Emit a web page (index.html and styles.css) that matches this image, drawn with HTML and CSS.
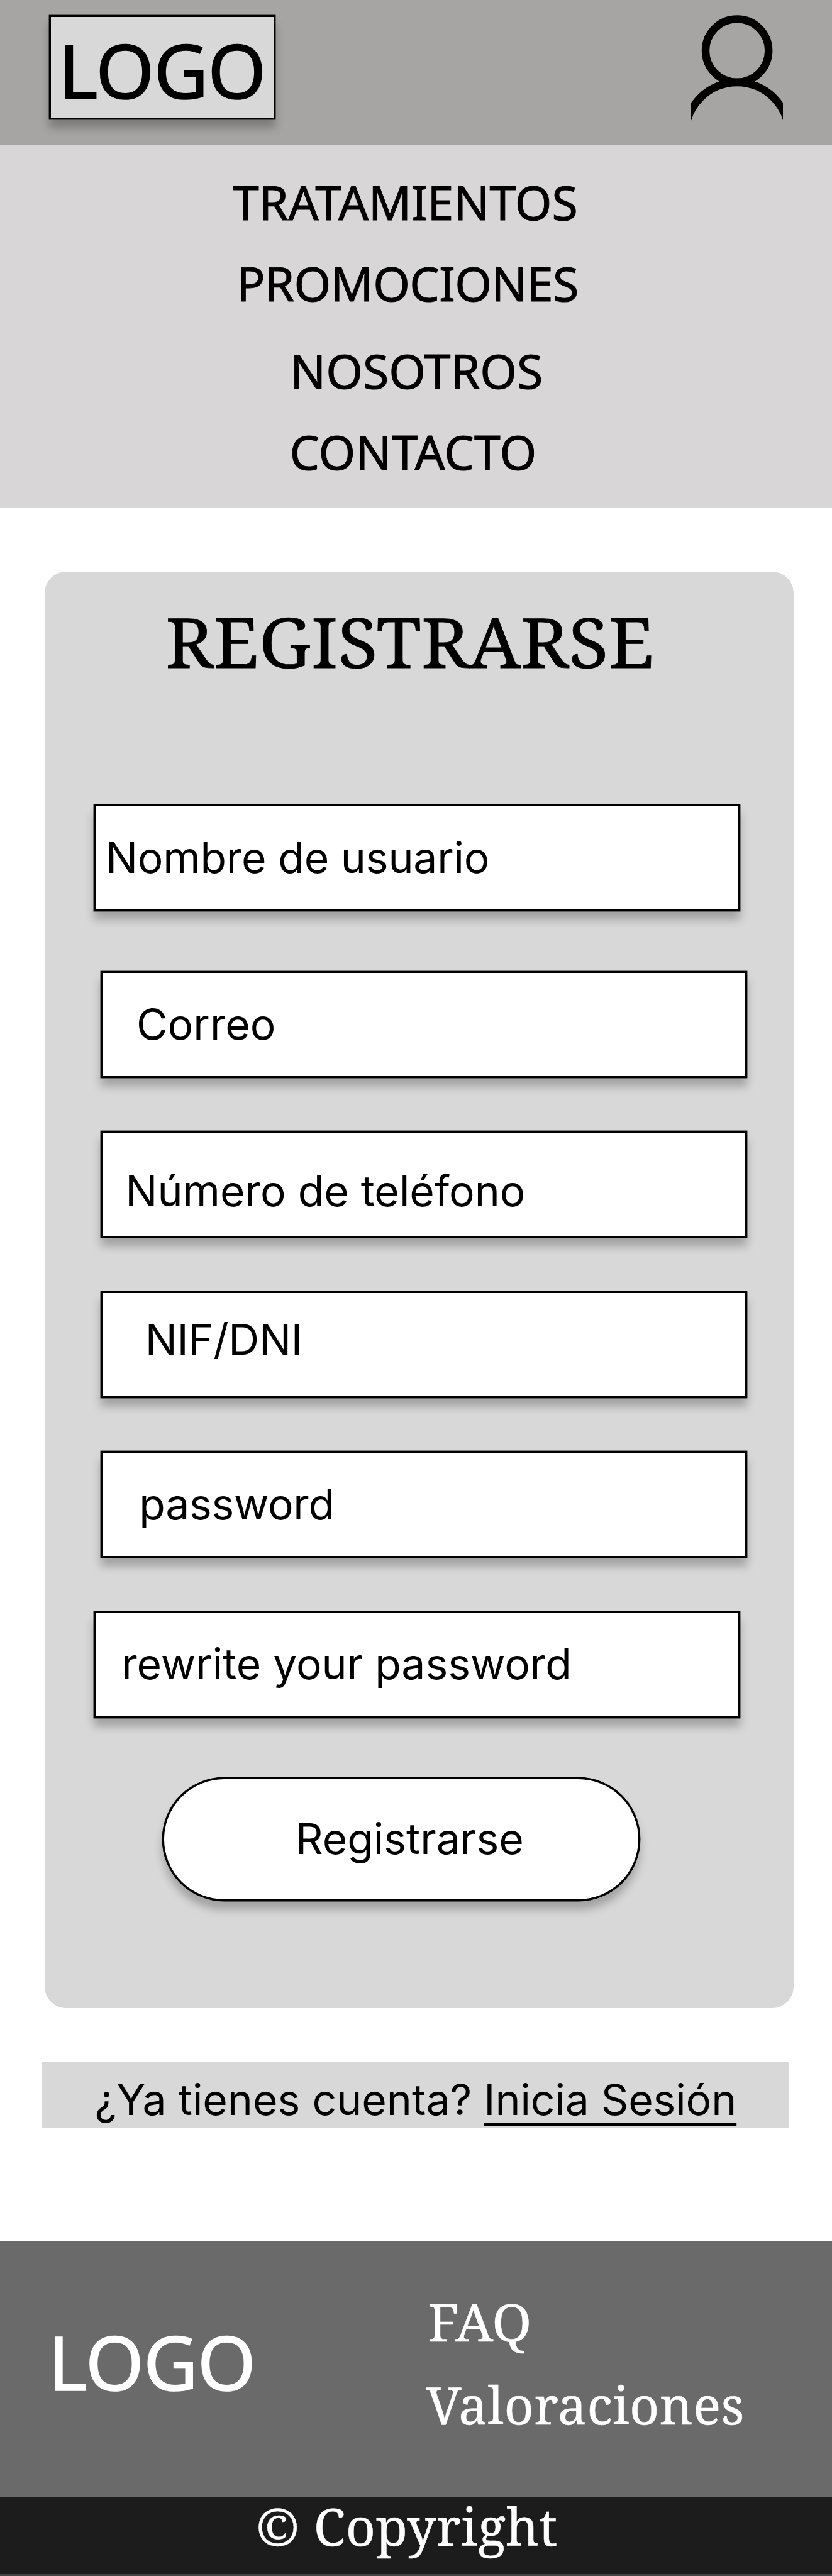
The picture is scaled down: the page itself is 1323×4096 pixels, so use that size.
FILE: index.html
```html
<!DOCTYPE html>
<html lang="es">
<head>
<meta charset="utf-8">
<title>Registrarse</title>
<link rel="stylesheet" href="styles.css">
</head>
<body>
<header class="header">
  <a class="logo">LOGO</a>
  <svg class="user-icon" viewBox="0 0 179 208" fill="none" stroke="#000" stroke-width="15.2">
    <circle cx="89.8" cy="69.5" r="61.6"/>
    <circle cx="89.8" cy="232.3" r="100.9"/>
  </svg>
</header>
<nav class="menu">
  <a class="menu-item treatments">TRATAMIENTOS</a>
  <a class="menu-item promotions">PROMOCIONES</a>
  <a class="menu-item about">NOSOTROS</a>
  <a class="menu-item contact">CONTACTO</a>
</nav>
<main>
  <form class="card">
    <h1 class="title">REGISTRARSE</h1>
    <div class="field field-user">Nombre de usuario</div>
    <div class="field field-mail">Correo</div>
    <div class="field field-phone">Número de teléfono</div>
    <div class="field field-id">NIF/DNI</div>
    <div class="field field-password">password</div>
    <div class="field field-repeat">rewrite your password</div>
    <div class="submit">Registrarse</div>
  </form>
  <p class="login">¿Ya tienes cuenta? <a class="login-link">Inicia Sesión</a></p>
</main>
<footer>
  <div class="footer-main">
    <div class="footer-logo">LOGO</div>
    <div class="footer-links">
      <a class="faq">FAQ</a>
      <a class="reviews">Valoraciones</a>
    </div>
  </div>
  <div class="copyright">© Copyright</div>
</footer>
</body>
</html>
```
FILE: styles.css
```css
* {
  box-sizing: border-box;
}

body {
  margin: 0;
  width: 1323px;
  height: 4096px;
  overflow: hidden;
  background: #fff;
  color: #000;
  font-family: Inter, "Liberation Sans", sans-serif;
  font-size: 67.85px;
  line-height: 82px;
  white-space: nowrap;
}

/* Top bar */
.header {
  display: flex;
  height: 230.4px;
  padding: 23.6px 0 0 78.1px;
  background: #a6a5a3;
}

.logo {
  width: 360.1px;
  height: 166.7px;
  padding: 24px 0 0 12px;
  border: 3px solid #000;
  background: #d8d8d8;
  box-shadow: 0 0 0 .4px #000, 0 13.6px 13.6px rgba(0, 0, 0, .25);
}

.logo,
.footer-logo {
  font-family: "Noto Sans", "Open Sans", sans-serif;
  font-size: 119.5px;
  line-height: 120px;
  letter-spacing: -1.1px;
  -webkit-text-stroke: 1.6px currentColor;
}

.user-icon {
  width: 145.7px;
  height: 169.3px;
  margin-left: 661.1px;
}

/* Menu */
.menu {
  display: flex;
  flex-direction: column;
  height: 577px;
  padding-top: 51px;
  background: #d8d6d7;
  font-family: "Noto Sans", "Open Sans", sans-serif;
  font-size: 75.2px;
  line-height: 80px;
}

.menu-item {
  -webkit-text-stroke: 1px currentColor;
}

.treatments {
  margin-left: 370px;
}

.promotions {
  margin: 48.9px 0 0 376.3px;
  letter-spacing: -.58px;
}

.about {
  margin: 58.9px 0 0 461.1px;
}

.contact {
  margin: 49.2px 0 0 460.4px;
  letter-spacing: .2px;
}

/* Registration card */
.card {
  width: 1190.6px;
  height: 2284px;
  margin: 101.6px 0 0 71.2px;
  padding: 55.7px 0 0 77.7px;
  border-radius: 34px;
  background: #d8d8d8;
}

.title {
  margin: 0 0 204.4px 114px;
  font-family: "Noto Serif", "DejaVu Serif", serif;
  font-size: 109px;
  font-weight: 400;
  line-height: 110px;
  transform: scaleX(1.067);
  transform-origin: left;
  -webkit-text-stroke: .8px currentColor;
}

.field {
  width: 1028.5px;
  height: 169.9px;
  margin: 0 0 84.6px 10.8px;
  padding-top: 39.8px;
  border: 3px solid #000;
  background: #fff;
  box-shadow: 0 0 0 .4px #000, 0 13.6px 13.6px rgba(0, 0, 0, .25);
}

.field-user {
  margin: 0 0 94.8px;
  padding-left: 16px;
  letter-spacing: -.2px;
}

.field-mail {
  padding-left: 54.4px;
}

.field-phone {
  padding: 50.3px 0 0 36.6px;
}

.field-id {
  padding: 32.6px 0 0 68px;
  letter-spacing: -.3px;
}

.field-password {
  padding-left: 58.6px;
  letter-spacing: -.3px;
}

.field-repeat {
  margin: 0 0 94.5px;
  padding-left: 41.3px;
  letter-spacing: -.05px;
}

.submit {
  width: 759.9px;
  height: 197.4px;
  margin-left: 109px;
  padding: 53.3px 0 0 209.1px;
  border: 3px solid #000;
  border-radius: 98.7px;
  background: #fff;
  box-shadow: 0 0 0 .4px #000, 0 13.6px 13.6px rgba(0, 0, 0, .25);
}

/* Existing account */
.login {
  width: 1188.3px;
  height: 105.4px;
  margin: 84.6px 0 0 67.2px;
  padding: 19.7px 0 0 83.4px;
  background: #d8d8d8;
}

.login-link {
  letter-spacing: -.1px;
  text-decoration: underline;
  text-decoration-thickness: 5px;
  text-underline-offset: 13px;
  text-decoration-skip-ink: none;
}

/* Footer */
footer {
  margin-top: 180px;
  color: #fff;
  font-family: "Noto Serif", "DejaVu Serif", serif;
  font-size: 82px;
  line-height: 90px;
}

.footer-main {
  display: flex;
  height: 407.5px;
  background: #6a6a6a;
}

.footer-logo {
  width: 601.4px;
  margin: 132px 0 0 76.6px;
}

.footer-links {
  display: flex;
  flex-direction: column;
  gap: 42.3px;
  padding-top: 82.8px;
  -webkit-text-stroke: .5px currentColor;
}

.faq {
  margin-left: 1.6px;
  transform: scaleX(1.036);
  transform-origin: left;
}

.reviews {
  letter-spacing: .5px;
}

.copyright {
  height: 125.5px;
  padding: 1px 0 0 407px;
  border-bottom: 3px solid #444;
  background: #1c1c1c;
  letter-spacing: .6px;
  -webkit-text-stroke: .5px currentColor;
}
```
